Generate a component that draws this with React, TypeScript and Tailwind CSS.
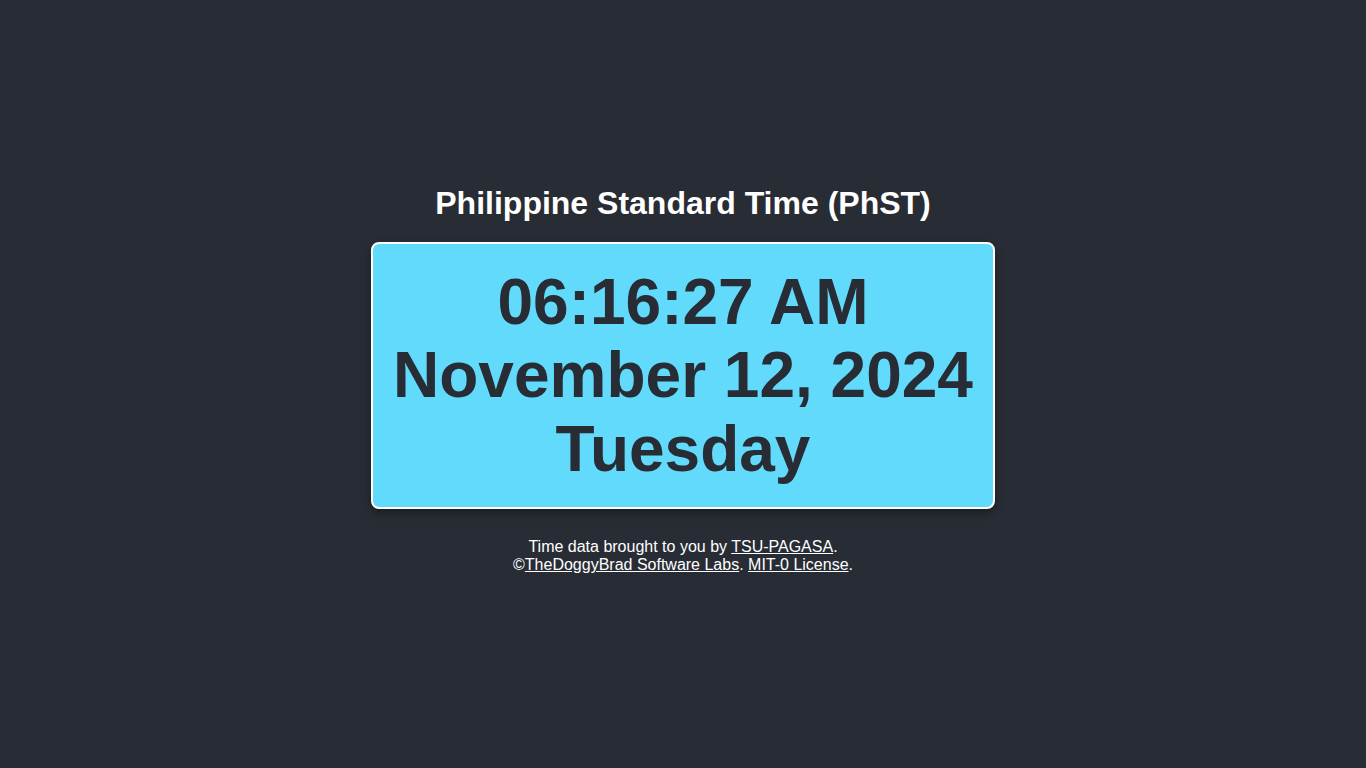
import React from 'react';

export default function App() {
  return (
    <main className="min-h-screen bg-[#282c34] text-white flex flex-col items-center pt-[185px] font-['Liberation_Sans',Arial,sans-serif]">
      <h1 className="text-[32px] font-bold leading-[36.8px] mb-[20px]">Philippine Standard Time (PhST)</h1>
      <div className="w-[624px] bg-[#61dafb] border-2 border-white rounded-lg shadow-[0_4px_8px_rgba(0,0,0,0.35)] pt-[22px] pb-[20px] text-center text-[#282c34] text-[64px] font-bold leading-[73.6px]">
        <div>06:16:27 AM</div>
        <div>November 12, 2024</div>
        <div>Tuesday</div>
      </div>
      <p className="mt-[29px] text-[16px] leading-[18px] text-center">
        Time data brought to you by <a href="#" className="underline">TSU-PAGASA</a>.
        <br />
        ©<a href="#" className="underline">TheDoggyBrad Software Labs</a>. <a href="#" className="underline">MIT-0 License</a>.
      </p>
    </main>
  );
}
